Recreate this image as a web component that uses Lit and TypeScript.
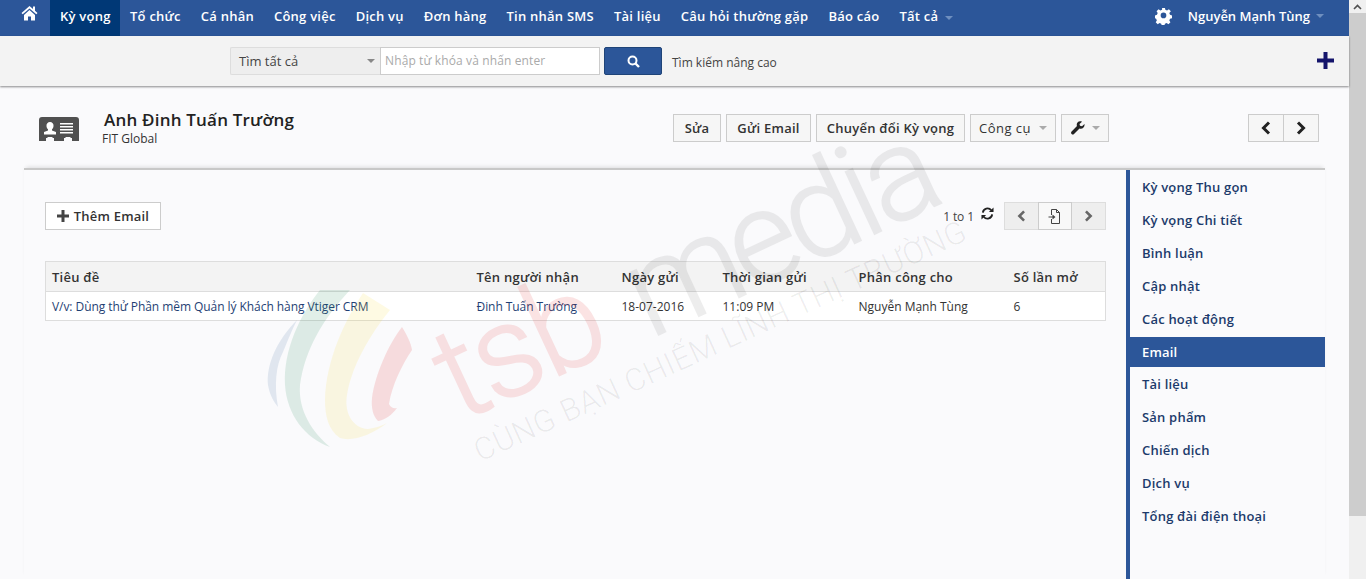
import { LitElement, html, css, svg } from "lit";
import { customElement } from "lit/decorators.js";

const navItems = ["Kỳ vọng", "Tổ chức", "Cá nhân", "Công việc", "Dịch vụ", "Đơn hàng", "Tin nhắn SMS", "Tài liệu", "Câu hỏi thường gặp", "Báo cáo"];
const sideItems = ["Kỳ vọng Thu gọn", "Kỳ vọng Chi tiết", "Bình luận", "Cập nhật", "Các hoạt động", "Email", "Tài liệu", "Sản phẩm", "Chiến dịch", "Dịch vụ", "Tổng đài điện thoại"];
const columns = ["Tiêu đề", "Tên người nhận", "Ngày gửi", "Thời gian gửi", "Phân công cho", "Số lần mở"];
const row = ["V/v: Dùng thử Phần mềm Quản lý Khách hàng Vtiger CRM", "Đinh Tuấn Trường", "18-07-2016", "11:09 PM", "Nguyễn Mạnh Tùng", "6"];

const caret = html`<span class="caret"></span>`;
const chevLeft = html`<svg class="chev" viewBox="0 0 10 14"><path d="M8 1.500 2.500 7 8 12.500" fill="none" stroke="currentColor" stroke-width="3"/></svg>`;
const chevRight = html`<svg class="chev" viewBox="0 0 10 14"><path d="M2 1.500 7.500 7 2 12.500" fill="none" stroke="currentColor" stroke-width="3"/></svg>`;

@customElement("app-root")
export class AppRoot extends LitElement {
  static styles = css`
    :host { display: flex; width: 1366px; height: 579px; overflow: hidden; position: relative; font-family: "Open Sans", "Noto Sans", sans-serif; font-size: 12px; color: #333; background: #fafafc; }
    .page { width: 1349px; display: flex; flex-direction: column; flex: none; position: relative; }
    .scrollbar { width: 17px; background: #f0f0f0; display: flex; flex-direction: column; }
    .sb-arrow { height: 13px; background: #f0f0f0; display: flex; justify-content: center; align-items: center; color: #505050; }
    .sb-arrow svg { width: 9px; height: 6px; }
    .sb-thumb { height: 503px; background: #cdcdcd; }

    .nav { height: 36px; background: #2c5699; display: flex; color: #fff; flex: none; font-weight: 600; font-size: 13px; letter-spacing: .24px; }
    .home { width: 50px; display: flex; padding: 5px 0 0 21px; box-sizing: border-box; }
    .home svg { width: 17px; height: 16px; }
    .item { padding: 0 10px; line-height: 33px; height: 36px; white-space: nowrap; box-sizing: border-box; display: flex; gap: 7px; }
    .item.active { background: #003876; width: 70px; }
    .caret { display: inline-block; width: 0; height: 0; border: 4px solid transparent; border-top-color: #aaa; border-bottom: 0; align-self: center; flex: none; }
    .nav .caret { border-top-color: #6f8fbf; }
    .nav-right { margin-left: auto; display: flex; align-items: center; padding: 0 25px 4px 0; letter-spacing: 0; }
    .gear { width: 17px; height: 17px; margin-right: 16px; }
    .user { display: flex; gap: 6px; align-items: center; white-space: nowrap; }

    .search { height: 50px; background: #f3f3f3; box-shadow: 0 1px 2px rgba(0,0,0,.45); flex: none; display: flex; padding: 11px 15px 0 230px; box-sizing: border-box; position: relative; z-index: 1; }
    .sel { width: 150px; height: 28px; box-sizing: border-box; background: #eee; border: 1px solid #ddd; border-right: 0; border-radius: 2px 0 0 2px; display: flex; align-items: center; justify-content: space-between; padding: 0 5px 0 8px; font-size: 13px; color: #444; }
    .sel .caret { border-top-color: #888; }
    .input { width: 220px; height: 28px; box-sizing: border-box; background: #fff; border: 1px solid #ccc; padding-left: 4px; line-height: 25px; font-size: 12px; color: #aaa; letter-spacing: .12px; white-space: nowrap; }
    .sbtn { width: 58px; height: 28px; margin-left: 4px; background: #2c5699; border: 1px solid #1f4478; border-radius: 2px; box-sizing: border-box; display: flex; align-items: center; justify-content: center; }
    .sbtn svg { width: 13px; height: 13px; }
    .adv { margin-left: 10px; font-size: 12px; line-height: 32px; color: #444; }
    .addbig { margin-left: auto; margin-top: 5px; width: 17px; height: 17px; }
    .addbig svg { display: block; }

    .head { height: 82px; flex: none; display: flex; box-sizing: border-box; padding: 0 30px 0 39px; position: relative; }
    .idcard { width: 40px; height: 26px; margin-top: 31px; flex: none; }
    .title { margin-left: 23px; padding-top: 23px; }
    .title h1 { margin: 0 0 0 2px; font-size: 17px; line-height: 22px; font-weight: 600; color: #222; letter-spacing: .2px; }
    .title p { margin: 0; font-size: 12px; line-height: 15px; color: #333; }
    .actions { margin-left: auto; display: flex; gap: 5px; padding-top: 28px; }
    .btn { height: 28px; box-sizing: border-box; border: 1px solid #ccc; background: #f6f6f6; display: flex; align-items: center; justify-content: center; gap: 8px; font-size: 13px; font-weight: 600; color: #333; white-space: nowrap; padding: 0 10px; letter-spacing: .25px; }
    .btn.w1 { width: 48px; }
    .btn.w2 { width: 85px; }
    .btn.w3 { width: 149px; }
    .btn.w4 { width: 86px; font-weight: 500; letter-spacing: .5px; }
    .btn.w5 { width: 48px; padding: 0; gap: 7px; }
    .wrench { width: 14px; height: 14px; flex: none; }
    .pager { display: flex; margin-left: 134px; }
    .pager .btn { width: 36px; padding: 0; color: #222; }
    .pager .btn + .btn { margin-left: -1px; }
    .chev { width: 10px; height: 14px; }

    .body { flex: 1; display: flex; margin-left: 24px; width: 1301px; min-height: 0; border-top: 2px solid #c8c8c8; box-shadow: 0 -3px 4px -2px rgba(0,0,0,.12); background: #fafafc; }
    .panel { width: 1102px; flex: none; padding: 32px 20px 0 21px; box-sizing: border-box; }
    .toolbar { display: flex; align-items: flex-start; }
    .add { height: 28px; width: 116px; box-sizing: border-box; border: 1px solid #ccc; background: #fff; display: flex; align-items: center; justify-content: center; gap: 5px; font-size: 13px; font-weight: 600; color: #333; letter-spacing: .2px; }
    .add svg { width: 12px; height: 12px; }
    .count { margin-left: auto; font-size: 12px; color: #444; line-height: 30px; display: flex; letter-spacing: -.1px; }
    .refresh { width: 13px; height: 13px; margin: 5px 0 0 7px; }
    .group { display: flex; margin-left: 10px; }
    .gbtn { height: 28px; width: 35px; box-sizing: border-box; border: 1px solid #ddd; background: #eee; display: flex; align-items: center; justify-content: center; color: #666; }
    .gbtn.mid { width: 34px; margin: 0 -1px; background: #f8f8f8; border-color: #ccc; position: relative; }
    .gbtn .chev { width: 9px; height: 12px; }
    .file { width: 14px; height: 15px; }
    table { margin-top: 29px; width: 1061px; border-collapse: collapse; table-layout: fixed; border: 1px solid #ddd; background: #fff; }
    th { height: 29px; padding: 0 6px; background: #f3f3f3; border-bottom: 1px solid #ddd; text-align: left; font-size: 13px; font-weight: 600; color: #333; white-space: nowrap; letter-spacing: .25px; }
    td { height: 28px; padding: 0 6px; font-size: 12px; color: #333; white-space: nowrap; }
    td.link { color: #1f3f74; letter-spacing: -.06px; }
    .side { flex: none; width: 199px; border-left: 4px solid #2c5699; box-sizing: border-box; padding-top: 2.3px; }
    .side div { height: 30px; margin-bottom: 2.85px; line-height: 30px; padding-left: 12px; font-size: 13px; font-weight: 600; color: #1c3a6b; white-space: nowrap; box-sizing: border-box; letter-spacing: .2px; }
    .side div.on { background: #2c5699; color: #fff; }
    .mark { position: absolute; left: 0; top: 0; width: 1349px; height: 579px; pointer-events: none; z-index: 2; }
    .mark text { font-family: Roboto, "Open Sans", sans-serif; font-weight: 300; }
  `;

  render() {
    return html`
      <div class="page">
        <div class="nav">
          <div class="home"><svg viewBox="0 0 17 16"><path fill="#fff" d="M8.500 1 .5 8l1.200 1.200L8.500 3.400l6.800 5.800L16.500 8l-2.500-2.200V1.500h-2v2.600zM3 10v5.500h4v-4h3v4h4V10L8.500 5z"/></svg></div>
          ${navItems.map((n, i) => html`<div class="item ${i === 0 ? "active" : ""}">${n}</div>`)}
          <div class="item">Tất cả ${caret}</div>
          <div class="nav-right">
            <svg class="gear" viewBox="0 0 24 24"><path fill="#fff" fill-rule="evenodd" d="M10 1h4l.6 3 2.400 1 2.600-1.700 2.800 2.800L20.200 8.700l1 2.400 2.800.9v4l-2.800.600-1 2.400 1.600 2.500-2.800 2.800-2.600-1.700-2.400 1-.6 2.400h-4l-.6-2.400-2.400-1-2.600 1.700-2.800-2.800 1.600-2.500-1-2.400L0 16v-4l2.800-.9 1-2.400L2.200 6.100 5 3.300 7.600 5 10 4zM12 8a4 4 0 1 0 0 8 4 4 0 0 0 0-8z" transform="translate(0 -1.500)"/></svg>
            <div class="user">Nguyễn Mạnh Tùng ${caret}</div>
          </div>
        </div>
        <div class="search">
          <div class="sel">Tìm tất cả ${caret}</div>
          <div class="input">Nhập từ khóa và nhấn enter</div>
          <div class="sbtn"><svg viewBox="0 0 13 13"><circle cx="5.500" cy="5.500" r="4" fill="none" stroke="#fff" stroke-width="2"/><path d="m8.500 8.500 3.500 3.500" stroke="#fff" stroke-width="2.400"/></svg></div>
          <div class="adv">Tìm kiếm nâng cao</div>
          <div class="addbig"><svg width="17" height="17" viewBox="0 0 17 17"><path fill="#14146b" d="M6.500 0h4v6.500H17v4h-6.500V17h-4v-6.500H0v-4h6.500z"/></svg></div>
        </div>
        <div class="head">
          <svg class="idcard" viewBox="0 0 40 26"><path fill="#505050" d="M3 0h34a3 3 0 0 1 3 3v21h-7v-3h-1.500v-1h-5v1H25v3H15v-3h-1.500v-1h-5v1H7v3H0V3a3 3 0 0 1 3-3z"/><path fill="#fff" d="M11 5a3.500 3.500 0 0 1 3.500 4c0 1.500-.8 2.800-1.500 3.200v1.300l4 1.500v2.500H5V15l4-1.500v-1.300C8.300 11.800 7.500 10.500 7.500 9A3.500 3.500 0 0 1 11 5zM21 6h13v1.500H21zM21 9h13v1.500H21zM21 12h13v1.500H21zM21 15h13v1.500H21z"/></svg>
          <div class="title"><h1>Anh Đinh Tuấn Trường</h1><p>FIT Global</p></div>
          <div class="actions">
            <div class="btn w1">Sửa</div>
            <div class="btn w2">Gửi Email</div>
            <div class="btn w3">Chuyển đổi Kỳ vọng</div>
            <div class="btn w4">Công cụ ${caret}</div>
            <div class="btn w5"><svg class="wrench" viewBox="0 0 14 14"><path fill="#222" d="M13.500 3 11 5.200 9 4.800 8.500 3 11 .8C9.500 0 7.500.300 6.500 1.500 5.700 2.500 5.500 3.800 6 5L.6 10.500c-.7.700-.7 1.700 0 2.400s1.700.7 2.400 0L8.500 7.500c1.500.5 3 .1 4-1 .9-1 1.200-2.300 1-3.500z"/></svg>${caret}</div>
            <div class="pager"><div class="btn">${chevLeft}</div><div class="btn">${chevRight}</div></div>
          </div>
        </div>
        <div class="body">
          <div class="panel">
            <div class="toolbar">
              <div class="add"><svg viewBox="0 0 12 12"><path fill="#444" d="M4.500 0h3v4.500H12v3H7.500V12h-3V7.500H0v-3h4.500z"/></svg>Thêm Email</div>
              <div class="count">1 to 1
                <svg class="refresh" viewBox="0 0 14 14"><path fill="none" stroke="#222" stroke-width="2" d="M2 6a5 5 0 0 1 9-2.500M12 8a5 5 0 0 1-9 2.500"/><path fill="#222" d="M13.500 .5v5h-5zM.5 13.500v-5h5z"/></svg>
              </div>
              <div class="group">
                <div class="gbtn">${chevLeft}</div>
                <div class="gbtn mid"><svg class="file" viewBox="0 0 14 15"><path fill="none" stroke="#444" d="M3.500 6V.5h5l3 3v11h-8V10"/><path fill="none" stroke="#444" d="M8.500.5v3h3"/><path fill="#444" d="M.5 7.500h4V5.500l3 2.500-3 2.500V8.500h-4z"/></svg></div>
                <div class="gbtn">${chevRight}</div>
              </div>
            </div>
            <table>
              <colgroup><col style="width:425px"/><col style="width:145px"/><col style="width:101px"/><col style="width:136px"/><col style="width:155px"/><col/></colgroup>
              <thead><tr>${columns.map((c) => html`<th>${c}</th>`)}</tr></thead>
              <tbody><tr>${row.map((c, i) => html`<td class="${i < 2 ? "link" : ""}">${c}</td>`)}</tr></tbody>
            </table>
          </div>
          <div class="side">${sideItems.map((s) => html`<div class="${s === "Email" ? "on" : ""}">${s}</div>`)}</div>
        </div>
        <svg class="mark" viewBox="0 0 1349 579">
          ${svg`
            <path fill="rgba(70,110,160,.14)" d="M297 320C277 340 266 365 268 385C270 396 274 402 278 407C274 385 276 365 283 352C287 342 292 330 297 320z"/>
            <path fill="rgba(40,140,90,.14)" d="M320 290H350C322 320 305 350 300 385C298 410 312 432 330 447C305 438 287 415 285 385C283 350 300 315 320 290z"/>
            <path fill="rgba(250,215,40,.13)" d="M363 293L390 310C370 335 352 365 347 395C344 412 352 428 368 429C375 428 382 426 387 423C372 435 352 442 340 438C328 430 325 415 325 400C326 360 345 320 363 293z"/>
            <path fill="rgba(230,50,50,.15)" d="M402 327C407 335 411 343 412 350C402 365 392 385 389 404C391 408 394 409 397 408C392 415 385 420 378 421C373 416 371 408 372 398C375 375 388 345 402 327z"/>
            <g opacity=".13"><text transform="translate(460 422) rotate(-25)" font-size="130" fill="#e63232" stroke="#e63232" stroke-width="1.500" textLength="172">tsb</text></g>
            <g opacity=".065"><text transform="translate(650 339) rotate(-25)" font-size="130" fill="#000" stroke="#000" stroke-width="1.500" textLength="330">media</text></g>
            <text transform="translate(480 462) rotate(-24.500)" font-size="31" fill="rgba(0,0,0,.07)" textLength="537">CÙNG BẠN CHIẾM LĨNH THỊ TRƯỜNG</text>
          `}
        </svg>
      </div>
      <div class="scrollbar">
        <div class="sb-arrow"><svg viewBox="0 0 9 6"><path d="M1 5 4.500 1.500 8 5" fill="none" stroke="currentColor" stroke-width="1.600"/></svg></div>
        <div class="sb-thumb"></div>
      </div>
    `;
  }
}
